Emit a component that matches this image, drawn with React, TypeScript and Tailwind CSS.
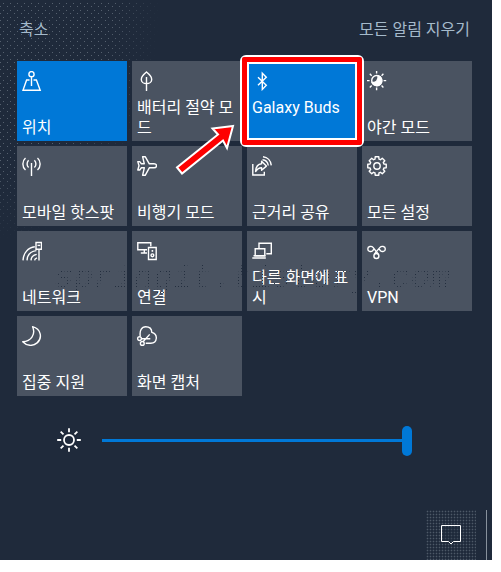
import { clsx } from 'clsx'
import { type ReactNode, useState } from 'react'

interface IconProps {
  size?: number
  children: ReactNode
}

const Icon = ({ size = 20, children }: IconProps) => (
  <svg
    width={size}
    height={size}
    viewBox={`0 0 ${size} ${size}`}
    fill="none"
    stroke="currentColor"
    strokeWidth="1.4"
    className="shrink-0"
    aria-hidden="true"
  >
    {children}
  </svg>
)

const polar = (radius: number, degrees: number, center: number) => {
  const rad = (degrees * Math.PI) / 180
  return `${(center + radius * Math.cos(rad)).toFixed(2)} ${(center + radius * Math.sin(rad)).toFixed(2)}`
}

const rays = (from: number, to: number, center: number) =>
  Array.from(
    { length: 8 },
    (_, i) => `M${polar(from, i * 45, center)}L${polar(to, i * 45, center)}`
  ).join('')

const gearPath = `M${Array.from({ length: 8 }, (_, i) => {
  const a = i * 45
  return [
    polar(7.2, a - 16, 10),
    polar(9.4, a - 11, 10),
    polar(9.4, a + 11, 10),
    polar(7.2, a + 16, 10)
  ].join('L')
}).join('L')}Z`

const icons = {
  location: (
    <>
      <circle cx="9.5" cy="3.2" r="2.6" />
      <path d="M9.5 5.8V15M7.5 9H4.6L1 19.3h17.2L14.4 9h-2.9" />
    </>
  ),
  leaf: (
    <path d="M9.5 6v14M9.5 1C6.2 3.6 4.3 5.8 4.3 8.4c0 2.5 2.3 4.2 5.2 4.2s5.2-1.7 5.2-4.2C14.7 5.8 12.8 3.6 9.5 1Z" />
  ),
  bluetooth: <path d="m6 6.2 8.3 8L10.3 18.4V2.2l4 4L6 14.2" />,
  night: (
    <>
      <circle cx="9.7" cy="9.5" r="5" />
      <path
        d="M11 4.8a5 5 0 1 1-5.8 6.6c3.800.8 6.600-2.600 5.800-6.600Z"
        fill="currentColor"
      />
      <path d={rays(7, 9.6, 9.6)} />
    </>
  ),
  hotspot: (
    <path d="M9.5 7v13M3.5 2C0 5 0 11 3.5 14M6.6 4.3c-2 2-2 5.3 0 7.3M15.5 2c3.5 3 3.5 9 0 12M12.4 4.3c2 2 2 5.3 0 7.3" />
  ),
  plane: (
    <path
      d="M12.3 7.8h4.7c1.5 0 2.5 1 2.5 2s-1 2-2.5 2h-4.7L8.2 19.3H5.6l1.7-7.5H4.4L2.7 14H.8l1.2-4.2L.8 5.6h1.9l1.7 2.2h2.9L5.6.7h2.6Z"
      strokeLinejoin="round"
    />
  ),
  share: (
    <>
      <path d="M.8 8v11h11.5v-3.2" />
      <path
        d="M3.6 15.5c.3-5 2.6-7.5 6-7.7V5.2l4.8 4.9-4.8 4.2v-2.6c-2.7 0-4.3 1.2-6 3.8Z"
        strokeLinejoin="round"
      />
      <path d="M10.5 3.7c3 .2 5.3 2.7 5.8 5.8M11 .8c4.6.4 7.8 4 8.3 8.6" />
    </>
  ),
  gear: (
    <>
      <path d={gearPath} strokeLinejoin="round" />
      <circle cx="10" cy="10" r="3.2" />
    </>
  ),
  network: (
    <>
      <path d="M1 19.4C1.4 12 6 6.6 12.8 5.8M5 19.4C5.3 14 8.8 10.2 14.4 9.6M9 19.4c.2-3.2 2-5.3 5.7-6M12.6 19.4c.1-1.2.9-2 2.4-2.5M17 9v10.5" />
      <path d="M14 1.5h5.5v6.8H14Z" />
      <path d="M15.5 4.4h2.7" />
    </>
  ),
  connect: (
    <>
      <path d="M10 8.8H.8V1.8h13v3.4M7.3 8.8v2.7M3.8 12H10" />
      <path d="M11.5 6.5h7.7v12h-7.7Z" />
      <circle cx="15.4" cy="14.3" r="1.4" />
      <path d="M14.6 9.9h1.6" strokeWidth="1.8" />
    </>
  ),
  project: (
    <>
      <path d="M7 7V2.2h12.3v10.6h-5" />
      <path d="M3.2 14.7V7.8h9.6v6.9Z" />
      <path d="M.3 17h13.5M1.5 14.8h12" />
    </>
  ),
  vpn: (
    <>
      <circle cx="9.4" cy="15" r="2.5" />
      <path d="M11.2 13 6 6.4C4.5 4.6.8 5.3.8 7.9c0 2.7 3.3 3.4 4.8 1.8L7.4 7.6" />
      <path d="M7.4 12.9l5.6-6.5c1.5-1.8 5.3-1.1 5.3 1.5 0 2.7-3.3 3.4-4.8 1.8L11.8 7.6" />
    </>
  ),
  moon: (
    <path
      d="M10.6.7c3.3 7.5-1.3 14.6-9.9 15.1 4 4.3 10.2 4.7 14.4 1.1C20.6 12 19.2 3.1 10.6.7Z"
      strokeLinejoin="round"
    />
  ),
  snip: (
    <>
      <path d="M3.3 10.5C2.3 4.5 4.7.8 8.7.8c3.7 0 6 2.2 6.1 5.5 3.1.9 4.7 3.1 4.5 6-.3 3.2-2.4 5-5.5 5H8.7" />
      <circle cx="2.5" cy="12.6" r="1.9" />
      <circle cx="5.3" cy="17.4" r="1.9" />
      <path d="M4.4 12.8h8.9M6 15.7l6.7-7.3" />
    </>
  )
}

interface QuickAction {
  label: string
  icon: keyof typeof icons
}

const QUICK_ACTIONS: QuickAction[] = [
  { label: '위치', icon: 'location' },
  { label: '배터리 절약 모드', icon: 'leaf' },
  { label: 'Galaxy Buds', icon: 'bluetooth' },
  { label: '야간 모드', icon: 'night' },
  { label: '모바일 핫스팟', icon: 'hotspot' },
  { label: '비행기 모드', icon: 'plane' },
  { label: '근거리 공유', icon: 'share' },
  { label: '모든 설정', icon: 'gear' },
  { label: '네트워크', icon: 'network' },
  { label: '연결', icon: 'connect' },
  { label: '다른 화면에 표시', icon: 'project' },
  { label: 'VPN', icon: 'vpn' },
  { label: '집중 지원', icon: 'moon' },
  { label: '화면 캡처', icon: 'snip' }
]

// Red frame and arrow that point at the bluetooth tile
const Callout = () => (
  <>
    <div className="pointer-events-none absolute -inset-x-[7px] -inset-y-[6px] rounded-md border-2 border-white">
      <div className="h-full rounded-xs border-5 border-[#fe0000]">
        <div className="h-full border-2 border-white" />
      </div>
    </div>
    <svg
      width="66"
      height="56"
      viewBox="0 0 66 56"
      className="pointer-events-none absolute top-[60px] right-full mr-2"
      aria-hidden="true"
    >
      <path
        d="M60 5 39.5 7.5 45 13.5 4 46.5 9 52.5 50 19.5 54 27Z"
        fill="#fe0000"
        stroke="#fff"
        strokeWidth="2"
      />
    </svg>
  </>
)

const ActionTile = ({
  action,
  active,
  onToggle
}: {
  action: QuickAction
  active: boolean
  onToggle: () => void
}) => {
  const highlighted = action.icon === 'bluetooth'

  return (
    <li className={clsx('relative', highlighted && 'z-20')}>
      <button
        type="button"
        aria-pressed={active}
        onClick={onToggle}
        className={clsx(
          'flex h-20 w-full flex-col items-start justify-between px-[5px] pt-[10px] pb-[3px] text-left text-base leading-5 break-all text-white',
          active ? 'bg-[#0078d7]' : 'bg-[#4a5361]'
        )}
      >
        <Icon>{icons[action.icon]}</Icon>
        <span className={clsx(highlighted && 'pb-5 whitespace-nowrap')}>
          {action.label}
        </span>
      </button>
      {highlighted && <Callout />}
    </li>
  )
}

const App = () => {
  const [active, setActive] = useState(['location', 'bluetooth'])
  const [brightness, setBrightness] = useState(100)

  const toggle = (icon: string) =>
    setActive((current) =>
      current.includes(icon)
        ? current.filter((item) => item !== icon)
        : [...current, icon]
    )

  return (
    <div className="bg-white pr-[9px] pb-3 font-['Roboto','Noto_Sans_CJK_KR',sans-serif]">
      <main className="relative bg-[#1f2a3b]">
        <div className="pointer-events-none absolute top-0 left-0 h-60 w-40 bg-[radial-gradient(#56616f_0.6px,transparent_0.9px),radial-gradient(#56616f_0.6px,transparent_0.9px)] mask-[radial-gradient(farthest-side_at_0_0,#000_70%,transparent)] bg-size-[7px_7px] bg-position-[0_0,4px_3px]" />

        <header className="relative flex justify-between pt-[19px] pr-[22px] pb-5 pl-[19px] text-base leading-[22px] text-[#a5bacb]">
          <button type="button">축소</button>
          <button type="button">모든 알림 지우기</button>
        </header>

        <section className="relative pr-5 pl-[17px]">
          <ul className="grid grid-cols-4 gap-[5px]">
            {QUICK_ACTIONS.map((action) => (
              <ActionTile
                key={action.icon}
                action={action}
                active={active.includes(action.icon)}
                onToggle={() => toggle(action.icon)}
              />
            ))}
          </ul>
          <p className="pointer-events-none absolute top-[200px] left-[54px] bg-[radial-gradient(#1f2a3b_0.5px,transparent_1px)] bg-size-[3px_3px] bg-clip-text font-['Liberation_Mono',monospace] text-[33px] leading-9 text-transparent italic opacity-90">
            springit.tistory.com
          </p>
        </section>

        <label className="flex items-center gap-[21px] pt-[29px] pr-20 pl-[57px] text-white">
          <Icon size={24}>
            <circle cx="12" cy="12" r="5" strokeWidth="1.8" />
            <path d={rays(7.8, 11.8, 12)} strokeWidth="1.8" />
          </Icon>
          <input
            type="range"
            aria-label="밝기"
            value={brightness}
            onChange={(e) => setBrightness(Number(e.target.value))}
            className="h-[30px] min-w-0 flex-1 appearance-none bg-transparent [&::-webkit-slider-runnable-track]:h-[3px] [&::-webkit-slider-runnable-track]:bg-[#0078d7] [&::-webkit-slider-thumb]:-mt-[13px] [&::-webkit-slider-thumb]:h-[30px] [&::-webkit-slider-thumb]:w-[10px] [&::-webkit-slider-thumb]:appearance-none [&::-webkit-slider-thumb]:rounded-full [&::-webkit-slider-thumb]:bg-[#0078d7]"
          />
        </label>

        <footer className="mt-[55px] flex justify-end gap-[10px] pr-[5px]">
          <button
            type="button"
            aria-label="알림 센터"
            className="flex size-[50px] items-center justify-center bg-[radial-gradient(#4d5967_0.7px,transparent_1.1px)] bg-size-[3px_3px] text-white"
          >
            <Icon>
              <path
                d="M.5 .5h19v16h-7L10 19l-2.5-2.5h-7Z"
                strokeWidth="1"
                fill="#1f2a3b"
                fillOpacity="0.3"
              />
            </Icon>
          </button>
          <div className="w-px bg-[#87919c]" />
        </footer>
      </main>
    </div>
  )
}

export default App
